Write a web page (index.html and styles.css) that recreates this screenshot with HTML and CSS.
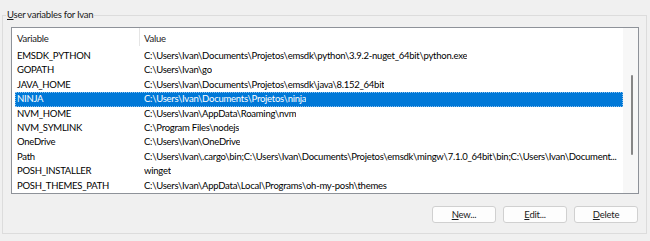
FILE: index.html
```html
<!DOCTYPE html>
<html lang="en">
<head>
    <meta charset="UTF-8">
    <meta name="viewport" content="width=device-width, initial-scale=1.0">
    <title>Environment Variables</title>
    <link rel="stylesheet" href="styles.css">
</head>
<body>
    <fieldset class="group">
        <legend class="group-title"><u>U</u>ser variables for Ivan</legend>

        <div class="list">
            <div class="list-body">
                <div class="list-header">
                    <span class="col-name">Variable</span>
                    <span class="col-value">Value</span>
                </div>
                <div class="row"><span class="col-name">EMSDK_PYTHON</span><span class="col-value">C:\Users\Ivan\Documents\Projetos\emsdk\python\3.9.2-nuget_64bit\python.exe</span></div>
                <div class="row"><span class="col-name">GOPATH</span><span class="col-value">C:\Users\Ivan\go</span></div>
                <div class="row"><span class="col-name">JAVA_HOME</span><span class="col-value">C:\Users\Ivan\Documents\Projetos\emsdk\java\8.152_64bit</span></div>
                <div class="row selected"><span class="col-name">NINJA</span><span class="col-value">C:\Users\Ivan\Documents\Projetos\ninja</span></div>
                <div class="row"><span class="col-name">NVM_HOME</span><span class="col-value">C:\Users\Ivan\AppData\Roaming\nvm</span></div>
                <div class="row"><span class="col-name">NVM_SYMLINK</span><span class="col-value">C:\Program Files\nodejs</span></div>
                <div class="row"><span class="col-name">OneDrive</span><span class="col-value">C:\Users\Ivan\OneDrive</span></div>
                <div class="row"><span class="col-name">Path</span><span class="col-value">C:\Users\Ivan\.cargo\bin;C:\Users\Ivan\Documents\Projetos\emsdk\mingw\7.1.0_64bit\bin;C:\Users\Ivan\Document...</span></div>
                <div class="row"><span class="col-name">POSH_INSTALLER</span><span class="col-value">winget</span></div>
                <div class="row"><span class="col-name">POSH_THEMES_PATH</span><span class="col-value">C:\Users\Ivan\AppData\Local\Programs\oh-my-posh\themes</span></div>
            </div>
            <div class="scrollbar"><div class="thumb"></div></div>
        </div>

        <div class="actions">
            <button type="button"><u>N</u>ew...</button>
            <button type="button"><u>E</u>dit...</button>
            <button type="button"><u>D</u>elete</button>
        </div>
    </fieldset>
</body>
</html>
```

FILE: styles.css
```css
body {
    margin: 0;
    background-color: #f0f0f0;
    font-family: 'Lato', 'Noto Sans', sans-serif;
    font-size: 9.5px;
    letter-spacing: -0.25px;
    color: #000;
}
.group {
    margin: 8px 3px 0 2px;
    padding: 0 7px 10px 8px;
    border: 1px solid #dcdcdc;
    min-width: 0;
}
.group-title {
    margin-left: -5px;
    padding: 0 1px;
    line-height: 14px;
    color: #1a1a1a;
}
.list {
    display: flex;
    height: 165px;
    margin-top: 5px;
    border: 1px solid #8e9299;
    background-color: #fff;
}
.list-body {
    flex: 1;
    overflow: hidden;
}
.list-header {
    display: flex;
    align-items: flex-start;
    height: 21px;
    margin-left: 3px;
    color: #222;
}
.list-header .col-name {
    width: 122px;
    padding: 4px 0 0 2px;
    line-height: 14px;
    border-right: 1px solid #e5e5e5;
}
.list-header .col-value {
    padding: 4px 0 0 4px;
    line-height: 14px;
}
.row {
    display: flex;
    height: 14.4px;
    line-height: 14.4px;
    margin-left: 3px;
    white-space: nowrap;
}
.row .col-name {
    width: 127px;
    padding-left: 2px;
    flex-shrink: 0;
}
.row .col-value {
    overflow: hidden;
    text-overflow: ellipsis;
}
.row.selected {
    background-color: #0078d7;
    color: #fff;
    outline: 1px dotted #8cc2ee;
    outline-offset: -1px;
}
.scrollbar {
    width: 15px;
    background-color: #f7f7f7;
}
.thumb {
    width: 2px;
    height: 80px;
    margin: 47px 0 0 8px;
    border-radius: 1px;
    background-color: #868686;
}
.actions {
    display: flex;
    justify-content: flex-end;
    gap: 7px;
    margin-top: 12px;
    padding-right: 1px;
}
button {
    width: 64px;
    height: 17px;
    padding: 0;
    border: 1px solid #d0d0d0;
    border-radius: 3px;
    background-color: #fdfdfd;
    font-family: inherit;
    font-size: 9.5px;
    letter-spacing: inherit;
    color: #1a1a1a;
}
```
